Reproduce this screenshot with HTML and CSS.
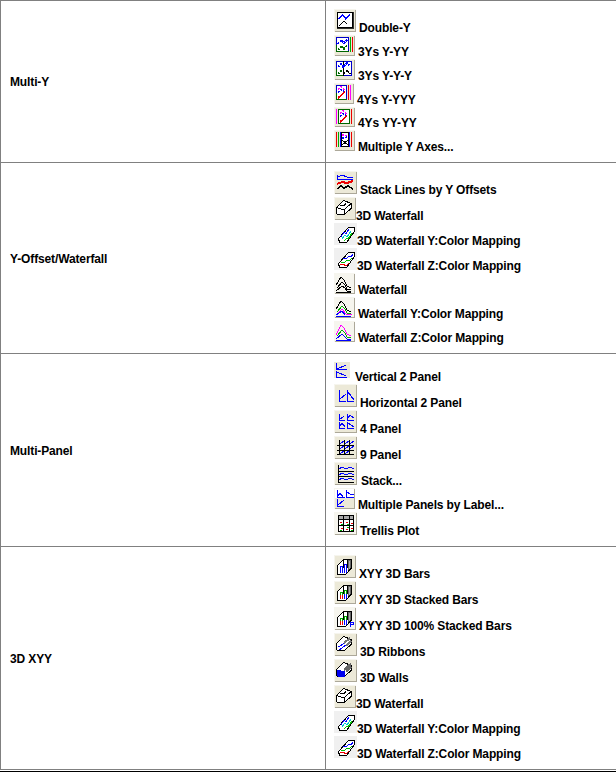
FILE: index.html
```html
<!DOCTYPE html>
<html>

<head>
<link rel="stylesheet" href="styles.css">
</head>

<body>
    <svg class="defs">
        <defs>
            <g id="g-double">
                <rect x="3.5" y="3.5" width="15" height="15" fill="#fff" stroke="#000"/>
                <rect x="3" y="3" width="16" height="16" fill="none" stroke="#000" stroke-width=".8"/>
                <path d="M5 10l4-4 3 4 4-5" fill="none" stroke="#00f" stroke-width="1.4"/>
                <path d="M5 17l5-5 3 3" fill="none" stroke="#000" stroke-width="1.4"/>
            </g>
            <g id="g-3y">
                <rect x="2.5" y="2.5" width="12" height="14" fill="#fff" stroke="#00c" stroke-width="1.5"/>
                <path d="M2.5 9.5V16.5H14.5" fill="none" stroke="#060" stroke-width="1.5"/>
                <path d="M4 9l3-4 3 3 4-4" fill="none" stroke="#00f" stroke-width="1.6" stroke-dasharray="2 1"/>
                <path d="M4 15l4-4 2 3 3-4" fill="none" stroke="#060" stroke-width="1.6" stroke-dasharray="2 1"/>
                <path d="M16.5 2V17" stroke="#0a0"/>
                <path d="M18.5 2V17" stroke="#e00"/>
            </g>
            <g id="g-3yy">
                <rect x="2.5" y="2.5" width="15" height="14" fill="#fff" stroke="#00c" stroke-width="1.5"/>
                <path d="M2.5 9.5V16.5H9.5" fill="none" stroke="#060" stroke-width="1.5"/>
                <path d="M9.5 2V17" stroke="#000" stroke-width="1.5"/>
                <path d="M4 8l3-3 2 3 4-4 3 3" fill="none" stroke="#00f" stroke-width="1.6" stroke-dasharray="2 1"/>
                <path d="M4 15l4-4" fill="none" stroke="#060" stroke-width="1.6" stroke-dasharray="2 1"/>
                <path d="M10 15l3-4 3 4" fill="none" stroke="#000" stroke-width="1.6" stroke-dasharray="2 1"/>
            </g>
            <g id="g-4y">
                <rect x="2.5" y="2.5" width="10" height="14" fill="#fff" stroke="#00c" stroke-width="1.5"/>
                <path d="M2.5 9.5V16.5H12.5" fill="none" stroke="#060" stroke-width="1.5"/>
                <path d="M4 6l3-2 4 3" fill="none" stroke="#f0f" stroke-width="1.6" stroke-dasharray="2 1"/>
                <path d="M4 9l3-2 4 2" fill="none" stroke="#00f" stroke-width="1.6" stroke-dasharray="2 1"/>
                <path d="M4 15l7-6" fill="none" stroke="#e00" stroke-width="1.6"/>
                <path d="M14.5 2V17" stroke="#e00"/>
                <path d="M16.5 2V17" stroke="#f0f"/>
            </g>
            <g id="g-4yy">
                <rect x="4.5" y="2.5" width="11" height="14" fill="#fff" stroke="#060" stroke-width="1.5"/>
                <path d="M2.5 2V17" stroke="#f0f"/>
                <path d="M17.5 2V17" stroke="#e00"/>
                <path d="M6 6l3-2 4 3" fill="none" stroke="#f0f" stroke-width="1.6" stroke-dasharray="2 1"/>
                <path d="M6 9l3-2 4 2" fill="none" stroke="#00f" stroke-width="1.6" stroke-dasharray="2 1"/>
                <path d="M6 15l7-6" fill="none" stroke="#e00" stroke-width="1.6"/>
            </g>
            <g id="g-multi">
                <path d="M2.5 2V17" stroke="#e00"/>
                <path d="M4.5 2V17" stroke="#0a0"/>
                <path d="M6.5 2V17" stroke="#00f"/>
                <path d="M15.5 2V17" stroke="#00f"/>
                <path d="M17.5 2V17" stroke="#e00"/>
                <rect x="7.5" y="2.5" width="7" height="14" fill="#fff" stroke="#000"/>
                <path d="M8 5l6 1" stroke="#f0f" stroke-width="1.6" stroke-dasharray="2 1"/>
                <path d="M8 8l6-1" stroke="#00f" stroke-width="1.6" stroke-dasharray="2 1"/>
                <path d="M8 15l6-5M8 10l6 5" stroke="#000"/>
            </g>
            <g id="g-stack">
                <path d="M3 4V8H19" fill="none" stroke="#00f"/>
                <path d="M4 6l4-2 5 2 6 1" fill="none" stroke="#00f"/>
                <path d="M3 13l5-2 5 1 6-2" fill="none" stroke="#e00" stroke-width="2"/>
                <path d="M3 18l4-3 3 2 4-2 5 3" fill="none" stroke="#000" stroke-width="1.4"/>
            </g>
            <g id="g-box" fill="none" stroke="#000">
                <path d="M2.5 10.5L9.5 3.5L17.5 6.5V11L10.5 17.5H3.5L2.5 16.5Z" fill="#fff"/>
                <path d="M2.5 10.5L10 13L17 6.5M10 13V17.5M6 8L10 9L12 6"/>
            </g>
            <g id="g-box-y">
                <path d="M4.5 15.5L14.5 4.5H20.5V8.5L12.5 19.5H5.5Z" fill="#fff" stroke="#000"/>
                <path d="M7 14l3-5 2 2 3-5" fill="none" stroke="#00f"/>
                <path d="M8 16l3-4 2 2 4-6" fill="none" stroke="#0cc"/>
                <path d="M10 18l3-3 1 1 4-6" fill="none" stroke="#0c0"/>
            </g>
            <g id="g-box-z">
                <path d="M4.5 15.5L14.5 4.5H20.5V8.5L12.5 19.5H5.5Z" fill="#fff" stroke="#000"/>
                <path d="M9 10l3 1 3-3 2 1 2-3" fill="none" stroke="#00f"/>
                <path d="M7 14l3 1 3-3 2 1 3-3" fill="none" stroke="#0b0"/>
                <path d="M6 17l3-1 3 2 3-3" fill="none" stroke="#e00"/>
            </g>
            <g id="g-fall" fill="none" stroke="#000">
                <path d="M2 12l5-8 3 3 3 6 4 2M3 15l5-6 3 3 2 4 4 1M2 18l6-5 3 2 2 3 4 1M2 19.5h15"/>
            </g>
            <g id="g-fall-y" fill="none">
                <path d="M2 12l5-8 3 3 3 6 4 2" stroke="#000"/>
                <path d="M3 15l5-6 3 3 2 4 4 1" stroke="#0a0"/>
                <path d="M4 16l4-4 4 5 6 1" stroke="#f0f"/>
                <path d="M2 18l6-4 3 4M2 19.5h15" stroke="#00f"/>
            </g>
            <g id="g-fall-z" fill="none">
                <path d="M2 14l5-10 3 3 3 6 4 2" stroke="#f0f"/>
                <path d="M3 15l5-6 3 3 2 4 4 1" stroke="#0a0"/>
                <path d="M2 18l6-5 3 3 2 2 4 1M2 19.5h15" stroke="#00f"/>
            </g>
            <g id="g-vert" fill="none" stroke="#00f">
                <path d="M2.5 1V7.5H13M3 7l9-4"/>
                <path d="M2.5 9V15.5H13M3 10l9 4"/>
            </g>
            <g id="g-hor" fill="none" stroke="#00f">
                <path d="M5.5 6V17.5H12M5 16l7-6"/>
                <path d="M13.5 6V17.5H19.5M14 8l6 8"/>
            </g>
            <g id="g-four" fill="none" stroke="#00f">
                <path d="M5.5 4V10.5H11M5 10l5-4M13.5 4V10.5H20M14 8l2-3 4 3"/>
                <path d="M5.5 12V18.5H11M6 16l2-3 3 4M13.5 12V18.5H20M14 13l6 4"/>
            </g>
            <g id="g-nine" fill="none">
                <path d="M5.5 4V19M10.5 4V19M15.5 4V19M3 9.5H20M3 14.5H20M3 18.5H20" stroke="#000"/>
                <path d="M6 8l4-3M11 8l4-3M16 8l4-3M6 13l4-3M11 13l4-3M16 13l4-3M6 18l4-3M11 18l4-3" stroke="#00f"/>
            </g>
            <g id="g-lines" fill="none">
                <path d="M4.5 3V20H20M4.5 9.5H20M4.5 14.5H20" stroke="#000"/>
                <path d="M5 6.5l3-1 4 1 4-1 4 1M5 12.5l3-1 4 1 4-1 4 1M5 17.5l3-1 4 1 4-1 4 1" stroke="#00f"/>
            </g>
            <g id="g-label" fill="none" stroke="#00f">
                <rect x="1" y="1" width="19" height="9" fill="#fff" stroke="none"/>
                <path d="M3.5 2V9.5H10.5M4 8l2-3 3 4M12.5 2V9.5H20M13 4l3 2 4 1"/>
                <path d="M3.5 11V18.5H10M4 17l6-5"/>
            </g>
            <g id="g-trellis">
                <rect x="4" y="3" width="16" height="16" fill="#fff"/>
                <rect x="4" y="3" width="16" height="4" fill="#aaa"/>
                <path d="M4.5 3.5H19.5V19.5H4.5ZM4.5 7.5H19.5M4.5 13.5H19.5M9.5 3V20M15.5 3V20" fill="none" stroke="#000"/>
                <path d="M6 10h2M12 10h2M17 11h2M7 16h2M12 17h2M17 16h2" stroke="#e00"/>
                <path d="M7 12h2M13 12h2M6 18h2M13 15h2M17 18h2" stroke="#0a0"/>
            </g>
            <g id="g-bars" fill="none" stroke="#000">
                <path d="M3.5 10.5L9.5 4.5H17.5V13L11.5 19.5H3.5Z" fill="#fff"/>
                <path d="M9.5 4.5V13M13.5 4.5V13"/>
                <path d="M6.5 18V11H8.5V18M10.5 18V9H12.5V18" stroke="#00f"/>
                <path d="M14.5 15V5H16.5V13" fill="#aaa" stroke="#666"/>
            </g>
            <g id="g-bars-s" fill="none" stroke="#000">
                <path d="M3.5 10.5L9.5 4.5H17.5V13L11.5 19.5H3.5Z" fill="#fff"/>
                <path d="M9.5 4.5V13M13.5 4.5V13"/>
                <path d="M6.5 18V14M8.5 18V14" stroke="#e00"/>
                <path d="M6.5 14V11H8.5V14M10.5 13V9H12.5V13" stroke="#0a0"/>
                <path d="M10.5 18V13M12.5 18V13" stroke="#00f"/>
                <path d="M14.5 15V5H16.5V13" fill="#aaa" stroke="#666"/>
            </g>
            <g id="g-bars-p" fill="none" stroke="#000">
                <use href="#g-bars-s"/>
                <path d="M16.5 20V15H19.5V17.5H16.5" stroke="#00f"/>
            </g>
            <g id="g-ribbon">
                <path d="M2.5 10.5L9.5 3.5L17.5 6.5V11L10.5 17.5H3.5L2.5 16.5Z" fill="#fff" stroke="#000"/>
                <path d="M4 14l7-4M5 17l7-5" stroke="#00f"/>
                <path d="M10 10l6-5M12 13l5-5" stroke="#777" stroke-width="2"/>
            </g>
            <g id="g-walls">
                <path d="M2.5 10.5L9.5 3.5L17.5 6.5V11L10.5 17.5H3.5L2.5 16.5Z" fill="#fff" stroke="#000"/>
                <path d="M3 11l8 1 0 6H4L3 16Z" fill="#00e"/>
                <path d="M10 11l7-6M12 13l5-5" stroke="#666" stroke-width="2.6"/>
            </g>
        </defs>
    </svg>

    <table class="matrix">
        <tr>
            <td class="label">Multi-Y</td>
            <td class="items">
                <div class="item"><svg class="icon btn w22 h23"><use href="#g-double"/></svg>Double-Y</div>
                <div class="item"><svg class="icon btn w21 h21"><use href="#g-3y"/></svg>3Ys Y-YY</div>
                <div class="item"><svg class="icon btn w21 h21"><use href="#g-3yy"/></svg>3Ys Y-Y-Y</div>
                <div class="item"><svg class="icon btn w20 h21"><use href="#g-4y"/></svg>4Ys Y-YYY</div>
                <div class="item"><svg class="icon btn w21 h20"><use href="#g-4yy"/></svg>4Ys YY-YY</div>
                <div class="item"><svg class="icon btn w21 h21"><use href="#g-multi"/></svg>Multiple Y Axes...</div>
            </td>
        </tr>
        <tr>
            <td class="label">Y-Offset/Waterfall</td>
            <td class="items">
                <div class="item"><svg class="icon btn w23 h23"><use href="#g-stack"/></svg>Stack Lines by Y Offsets</div>
                <div class="item"><svg class="icon btn w22 h23 tight"><use href="#g-box"/></svg>3D Waterfall</div>
                <div class="item"><svg class="icon flat w23 h22 tight"><use href="#g-box-y"/></svg>3D Waterfall Y:Color Mapping</div>
                <div class="item"><svg class="icon flat w23 h22 tight"><use href="#g-box-z"/></svg>3D Waterfall Z:Color Mapping</div>
                <div class="item"><svg class="icon btn pale w21 h21"><use href="#g-fall"/></svg>Waterfall</div>
                <div class="item"><svg class="icon btn pale w21 h21"><use href="#g-fall-y"/></svg>Waterfall Y:Color Mapping</div>
                <div class="item"><svg class="icon btn pale w21 h21"><use href="#g-fall-z"/></svg>Waterfall Z:Color Mapping</div>
            </td>
        </tr>
        <tr>
            <td class="label">Multi-Panel</td>
            <td class="items">
                <div class="item"><svg class="icon plain w16 h16 raised wider"><use href="#g-vert"/></svg>Vertical 2 Panel</div>
                <div class="item"><svg class="icon btn w23 h23"><use href="#g-hor"/></svg>Horizontal 2 Panel</div>
                <div class="item"><svg class="icon btn w23 h23"><use href="#g-four"/></svg>4 Panel</div>
                <div class="item"><svg class="icon btn w23 h23"><use href="#g-nine"/></svg>9 Panel</div>
                <div class="item"><svg class="icon btn w23 h23 wide"><use href="#g-lines"/></svg>Stack...</div>
                <div class="item"><svg class="icon btn w21 h21"><use href="#g-label"/></svg>Multiple Panels by Label...</div>
                <div class="item"><svg class="icon btn pale w23 h23"><use href="#g-trellis"/></svg>Trellis Plot</div>
            </td>
        </tr>
        <tr>
            <td class="label">3D XYY</td>
            <td class="items">
                <div class="item"><svg class="icon btn w22 h23"><use href="#g-bars"/></svg>XYY 3D Bars</div>
                <div class="item"><svg class="icon btn w22 h23"><use href="#g-bars-s"/></svg>XYY 3D Stacked Bars</div>
                <div class="item"><svg class="icon btn pale w22 h23"><use href="#g-bars-p"/></svg>XYY 3D 100% Stacked Bars</div>
                <div class="item"><svg class="icon btn w23 h23"><use href="#g-ribbon"/></svg>3D Ribbons</div>
                <div class="item"><svg class="icon btn w23 h23"><use href="#g-walls"/></svg>3D Walls</div>
                <div class="item"><svg class="icon btn w22 h23 tight"><use href="#g-box"/></svg>3D Waterfall</div>
                <div class="item"><svg class="icon flat w23 h22 tight"><use href="#g-box-y"/></svg>3D Waterfall Y:Color Mapping</div>
                <div class="item"><svg class="icon flat w23 h22 tight"><use href="#g-box-z"/></svg>3D Waterfall Z:Color Mapping</div>
            </td>
        </tr>
    </table>
    <div class="endrule"></div>
</body>

</html>
```

FILE: styles.css
```css
body {
    margin: 0;
    background-color: white;
    font-family: "Liberation Sans", Arial, sans-serif;
    font-size: 12px;
    font-weight: bold;
    letter-spacing: -0.13px;
    color: black;
}

.defs {
    display: none;
}

.matrix {
    width: 100%;
    border-collapse: collapse;
    border-top: 1px solid #808080;
}

.matrix td {
    border: 1px solid #808080;
    border-right: none;
    padding: 8px 8px 8px 9px;
}

.matrix td.label {
    padding-top: 9px;
}

.matrix td.items {
    padding-left: 8px;
}

.label {
    width: 307px;
}

.item {
    line-height: 14px;
}

.icon {
    display: inline-block;
    margin-right: 3px;
    overflow: hidden;
    shape-rendering: crispEdges;
}

.icon.tight {
    margin-right: 0;
}

.icon.wide {
    margin-right: 4px;
}

.icon.wider {
    margin-right: 5px;
}

.icon.raised {
    margin-bottom: 3px;
}

.btn {
    background-color: #ece9d8;
    box-shadow: inset 1px 1px 0 #f6f5ee, inset -1px -1px 0 #aca899;
}

.pale {
    background-color: #f6f5ee;
}

.flat {
    background-color: #f0f0f0;
}

.plain {
    background-color: #ece9d8;
}

.w16 { width: 16px; }
.w20 { width: 20px; }
.w21 { width: 21px; }
.w22 { width: 22px; }
.w23 { width: 23px; }
.h16 { height: 16px; }
.h20 { height: 20px; }
.h21 { height: 21px; }
.h22 { height: 22px; }
.h23 { height: 23px; }

.endrule {
    height: 2px;
    margin-top: 1px;
    background-color: black;
}
```
